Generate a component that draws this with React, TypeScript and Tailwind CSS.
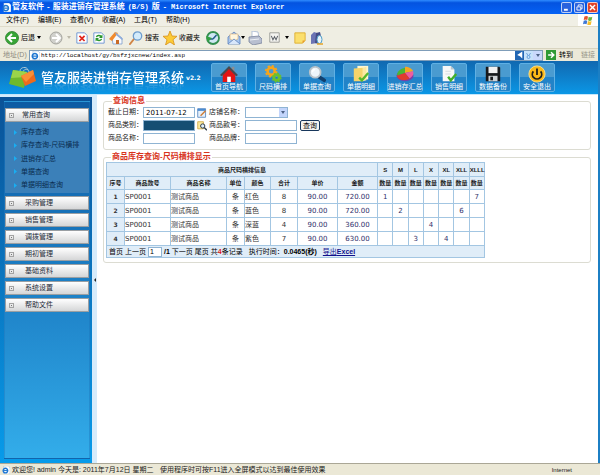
import type { ReactNode } from "react";

const menus = ["文件(F)", "编辑(E)", "查看(V)", "收藏(A)", "工具(T)", "帮助(H)"];

const queries = ["库存查询", "库存查询-尺码横排", "进销存汇总", "单据查询", "单据明细查询"];

const modules = ["采购管理", "销售管理", "调拨管理", "期初管理", "基础资料", "系统设置", "帮助文件"];

const sizes = ["S", "M", "L", "X", "XL", "XLL", "XLLL"];

const rows = [
  { code: "SP0001", name: "测试商品", unit: "条", color: "红色", total: 8, price: "90.00", amount: "720.00", qty: ["1", "", "", "", "", "", "7"] },
  { code: "SP0001", name: "测试商品", unit: "条", color: "蓝色", total: 8, price: "90.00", amount: "720.00", qty: ["", "2", "", "", "", "6", ""] },
  { code: "SP0001", name: "测试商品", unit: "条", color: "深蓝", total: 4, price: "90.00", amount: "360.00", qty: ["", "", "", "4", "", "", ""] },
  { code: "SP0001", name: "测试商品", unit: "条", color: "紫色", total: 7, price: "90.00", amount: "630.00", qty: ["", "", "3", "", "4", "", ""] },
];

const shortcuts: { label: string; icon: ReactNode }[] = [
  {
    label: "首页导航",
    icon: (
      <>
        <path d="M13 2h3v6h-3z" fill="#8a8f94" />
        <path d="M3 10v9h14v-9l-7-7z" fill="#e31414" />
        <path d="M0 11L10 1l10 10-2 1.500-8-8-8 8z" fill="#454b52" />
        <path d="M8 13h4v6H8z" fill="#fff" />
      </>
    ),
  },
  {
    label: "尺码横排",
    icon: (
      <>
        <circle cx="8" cy="7" r="4" fill="none" stroke="#f7a51b" strokeWidth="3" />
        <circle cx="8" cy="7" r="6" fill="none" stroke="#f7a51b" strokeWidth="2" strokeDasharray="2.4 2.3" />
        <circle cx="14" cy="14" r="3" fill="none" stroke="#6cc02c" strokeWidth="3" />
        <circle cx="14" cy="14" r="4.6" fill="none" stroke="#6cc02c" strokeWidth="2" strokeDasharray="1.9 1.7" />
      </>
    ),
  },
  {
    label: "单据查询",
    icon: (
      <>
        <path d="M12 13l6 4" stroke="#12406e" strokeWidth="4" strokeLinecap="round" />
        <circle cx="8" cy="8" r="6" fill="#eef5fa" stroke="#b9c2c9" strokeWidth="2" />
        <path d="M5 8a3 3 0 0 1 3-3" stroke="#fff" strokeWidth="1.5" fill="none" />
      </>
    ),
  },
  {
    label: "单据明细",
    icon: (
      <>
        <path d="M6 1h12v15H6z" fill="#fff6cf" />
        <path d="M2 4l10-1v15H2z" fill="#f5d46b" />
        <path d="M12 3l4-1v15l-4 1z" fill="#fbe9a2" />
        <path d="M8 14l3 3 7-8" fill="none" stroke="#55b82b" strokeWidth="2.6" />
      </>
    ),
  },
  {
    label: "进销存汇总",
    icon: (
      <>
        <ellipse cx="10" cy="12" rx="9.5" ry="6" fill="#7a3fa8" />
        <path d="M10 9L1 12c0-5 4-8 9-9z" fill="#49b536" />
        <path d="M10 9V2c4 0 8 2 9 5z" fill="#f5a623" />
        <path d="M10 9l9-2c1 4-1 6-4 8z" fill="#ef5da0" />
        <path d="M10 9l5 6c-5 3-13 2-14-3z" fill="#e23a2e" />
      </>
    ),
  },
  {
    label: "销售明细",
    icon: (
      <>
        <path d="M3 1h9l4 4v13H3z" fill="#f7f7f7" />
        <path d="M12 1l4 4h-4z" fill="#bcc6cc" />
        <path d="M6 7h6M6 10h6" stroke="#d3d9dc" />
        <path d="M9 13l3 4 6-7" fill="none" stroke="#42b029" strokeWidth="2.6" />
      </>
    ),
  },
  {
    label: "数据备份",
    icon: (
      <>
        <path d="M2 2h15l1 1v15H2z" fill="#17191c" />
        <path d="M5 2h10v7H5z" fill="#f1f1f1" />
        <path d="M5 12h10v6H5z" fill="#cfd3d6" />
        <path d="M7 13h3v4H7z" fill="#17191c" />
      </>
    ),
  },
  {
    label: "安全退出",
    icon: (
      <>
        <circle cx="10" cy="10" r="9" fill="#fbb917" stroke="#ffe08a" />
        <path d="M6 7a5.2 5.2 0 1 0 8 0" fill="none" stroke="#22211c" strokeWidth="2" />
        <path d="M10 4v7" stroke="#22211c" strokeWidth="2" />
      </>
    ),
  },
];

function Glyph({ children, className = "size-[14px]" }: { children: ReactNode; className?: string }) {
  return (
    <svg viewBox="0 0 14 14" className={`shrink-0 ${className}`} aria-hidden="true">
      {children}
    </svg>
  );
}

function Caret({ className = "text-black" }: { className?: string }) {
  return (
    <svg viewBox="0 0 4 3" className={`h-[3px] w-1 shrink-0 ${className}`} aria-hidden="true">
      <path d="M0 0h4L2 3z" fill="currentColor" />
    </svg>
  );
}

function IeIcon({ className = "size-[9px]" }: { className?: string }) {
  return (
    <Glyph className={className}>
      <path d="M3 0h8l3 3v11H3z" fill="#fff" stroke="#8fb0d8" strokeWidth=".8" />
      <circle cx="6" cy="8" r="4" fill="none" stroke="#1d76d2" strokeWidth="2.4" />
      <path d="M3 8h7" stroke="#1d76d2" strokeWidth="1.8" />
    </Glyph>
  );
}

function TitleBar() {
  return (
    <header className="flex h-[14px] items-center bg-linear-to-b from-[#2f8bff] via-[#0453e0] via-20% to-[#0562f5] pr-[2px] pl-[2px] text-white">
      <IeIcon />
      <h1 className="ml-px flex flex-1 items-center gap-[3px] text-[8px] leading-[12px] font-bold whitespace-pre">
        <span>管友软件</span>
        <span>-</span>
        <span>服装进销存管理系统</span>
        <span className="font-['Liberation_Mono',monospace] text-[7px]">(B/S)</span>
        <span>版</span>
        <span className="font-['Liberation_Mono',monospace] text-[7px]">- Microsoft Internet Explorer</span>
      </h1>
      <div className="flex gap-[2px]">
        <button aria-label="最小化" className="size-[11px] rounded-[2px] border border-white/70 bg-[#2a62dd]">
          <Glyph className="size-[9px]">
            <path d="M3 9h6v3H3z" fill="#fff" />
          </Glyph>
        </button>
        <button aria-label="还原" className="size-[11px] rounded-[2px] border border-white/70 bg-[#2a62dd]">
          <Glyph className="size-[9px]">
            <path d="M5 5V3h6v6H9M3 6h6v5H3z" fill="none" stroke="#fff" strokeWidth="1.4" />
          </Glyph>
        </button>
        <button aria-label="关闭" className="size-[11px] rounded-[2px] border border-white/70 bg-[#e0432b]">
          <Glyph className="size-[9px]">
            <path d="M3 3l8 8M11 3l-8 8" stroke="#fff" strokeWidth="2.2" />
          </Glyph>
        </button>
      </div>
    </header>
  );
}

function MenuBar() {
  return (
    <nav className="flex h-[13px] items-center border-b border-[#dedbc9] bg-[#f0efe5] pl-[6px]">
      {menus.map((m) => (
        <button key={m} className="w-8 text-left">
          {m}
        </button>
      ))}
      <div className="ml-auto flex h-full w-[20px] items-center justify-center bg-white">
        <Glyph className="size-[10px]">
          <path d="M2 2c2-1 3-1 5 0L6 7C4 6 3 6 1 7z" fill="#e5532d" />
          <path d="M8 2.500c2 1 3 1 5 0l-1 5c-2 1-3 1-5 0z" fill="#6db33a" />
          <path d="M1 8c2-1 3-1 5 0l-1 5c-2-1-3-1-5 0z" fill="#3f79d6" />
          <path d="M7 8.500c2 1 3 1 5 0l-1 5c-2 1-3 1-5 0z" fill="#f6bf2b" />
        </Glyph>
      </div>
    </nav>
  );
}

function ToolBar() {
  return (
    <div className="flex h-[22px] items-center border-b border-[#d8d4c0] bg-[#efeee3] pl-[5px]">
      <button className="flex w-[32px] items-center gap-[2px] whitespace-nowrap">
        <Glyph>
          <circle cx="7" cy="7" r="6.500" fill="#37a536" stroke="#2a7d2c" strokeWidth=".8" />
          <path d="M7 3L3 7l4 4M3.500 7H11" fill="none" stroke="#fff" strokeWidth="1.9" />
        </Glyph>
        后退
      </button>
      <Caret />
      <button aria-label="前进" className="ml-2">
        <Glyph>
          <circle cx="7" cy="7" r="6" fill="#d0d0cb" stroke="#a4a49e" />
          <path d="M7 3l4 4-4 4M10.500 7H3" fill="none" stroke="#fff" strokeWidth="1.9" />
        </Glyph>
      </button>
      <Caret className="ml-1 text-[#bcb9aa]" />
      <button aria-label="停止" className="ml-[5px]">
        <Glyph className="size-[12px]">
          <path d="M1 1h9l3 3v9H1z" fill="#fff" stroke="#5f8bcf" />
          <path d="M4 4.500l6 6M10 4.500l-6 6" stroke="#e1261c" strokeWidth="2" />
        </Glyph>
      </button>
      <button aria-label="刷新" className="ml-[5px]">
        <Glyph className="size-[12px]">
          <path d="M1 1h9l3 3v9H1z" fill="#fff" stroke="#5f8bcf" />
          <path d="M4 6c1-3 5-2 6 0M10 8c-1 3-5 2-6 0" fill="none" stroke="#29962c" strokeWidth="1.7" />
          <path d="M11 3v4H7zM3 11V7h4z" fill="#29962c" />
        </Glyph>
      </button>
      <button aria-label="主页" className="ml-1">
        <Glyph>
          <path d="M3 7l5-4 5 4v6H4z" fill="#f8f9fc" stroke="#7b9ccc" strokeWidth=".8" />
          <path d="M0 8L6 1l3 1-6 8z" fill="#f18a2d" />
          <path d="M6 1l8 7-1 1-6-5z" fill="#8cabdc" />
          <path d="M7 9h3v4H7z" fill="#c86b27" />
        </Glyph>
      </button>
      <button className="ml-[6px] flex items-center gap-[2px] whitespace-nowrap">
        <Glyph>
          <path d="M1 13l4-5" stroke="#d08344" strokeWidth="2" strokeLinecap="round" />
          <circle cx="8.500" cy="5" r="4.200" fill="#d3ebfb" stroke="#6c9ccd" strokeWidth="1.300" />
        </Glyph>
        搜索
      </button>
      <button className="ml-1 flex items-center gap-[2px] whitespace-nowrap">
        <Glyph>
          <path d="M7 0l2 5 5 .3-4 3.400L11.500 14 7 11l-4.500 3L4 8.700 0 5.300 5 5z" fill="#fccb37" stroke="#d8901b" strokeWidth=".8" />
        </Glyph>
        收藏夹
      </button>
      <button aria-label="历史" className="ml-[6px]">
        <Glyph>
          <circle cx="7" cy="7" r="6" fill="#cfe7f3" stroke="#348f51" strokeWidth="1.800" />
          <path d="M7 8l3.500-4M7 8H4" stroke="#255d8c" strokeWidth="1.500" />
          <path d="M0 5l6 2-4 4z" fill="#32a042" />
        </Glyph>
      </button>
      <button aria-label="邮件" className="ml-[7px]">
        <Glyph>
          <path d="M1 6l6-5 6 5v7H1z" fill="#a9c7ee" stroke="#5a82bd" strokeWidth=".8" />
          <path d="M3 3h8v5L7 10 3 8z" fill="#fff7df" stroke="#d8ad72" strokeWidth=".6" />
          <path d="M1 13l6-5 6 5" fill="#d9e7fa" stroke="#5a82bd" strokeWidth=".8" />
        </Glyph>
      </button>
      <Caret />
      <button aria-label="打印" className="ml-[3px]">
        <Glyph>
          <path d="M4 0l6 1 1 6H4z" fill="#fff" stroke="#9aaecb" strokeWidth=".7" />
          <path d="M1 6l10-1 3 3v4l-9 2-4-3z" fill="#b8bfd0" stroke="#7a849c" strokeWidth=".8" />
          <path d="M2 9l9-1" stroke="#eef1f6" />
        </Glyph>
      </button>
      <button aria-label="编辑" className="ml-[7px]">
        <Glyph className="size-[11px]">
          <path d="M1 1h12v12H1z" fill="#f4f4f0" stroke="#8b8c88" />
          <path d="M3 5l2 5 2-4 2 4 2-5" fill="none" stroke="#5b6068" strokeWidth="1.300" />
        </Glyph>
      </button>
      <Caret className="ml-[5px] text-black" />
      <button aria-label="讨论" className="ml-[5px]">
        <Glyph className="size-[12px]">
          <path d="M1 1h12v9l-3 3H1z" fill="#fbdf6d" stroke="#dcab2c" />
          <path d="M10 13v-3h3z" fill="#e8972c" />
        </Glyph>
      </button>
      <button aria-label="信使" className="ml-1">
        <Glyph>
          <path d="M1 4l3-3 3 1v10l-6 1z" fill="#6c74b4" />
          <path d="M6 2l4-1 1 4-2 8-4-1z" fill="#454c86" />
          <ellipse cx="9.500" cy="8.500" rx="2.500" ry="4" fill="#e8f3fa" stroke="#4f9fc9" />
          <path d="M7 13h6" stroke="#e5a52a" strokeWidth="1.500" />
        </Glyph>
      </button>
    </div>
  );
}

function AddressBar() {
  return (
    <form className="flex h-[12px] items-center bg-[#ece9d8] pr-[3px] pl-[3px]" onSubmit={(e) => e.preventDefault()}>
      <label htmlFor="url" className="w-[26px] shrink-0 whitespace-nowrap text-[#8c8a7e]">
        地址(D)
      </label>
      <div className="flex h-[11px] flex-1 items-center border border-[#7f9db9] bg-white pl-px">
        <IeIcon />
        <input
          id="url"
          className="ml-px h-[9px] min-w-0 flex-1 font-['Liberation_Mono',monospace] text-[6px] leading-[9px] text-black outline-none"
          defaultValue="http://localhost/gy/bsfzjxcnew/index.asp"
        />
        <span className="flex h-[9px] w-[9px] items-center justify-center bg-[#2166b4]">
          <Glyph className="size-[8px]">
            <path d="M2 7l9-6v12L7 9z" fill="#fff" />
          </Glyph>
        </span>
        <span className="flex h-[9px] w-[9px] items-center justify-center bg-[#c6e2fa]">
          <Glyph className="size-[7px]">
            <path d="M3 2l3 5M11 2L8 7" stroke="#4c8dd0" strokeWidth="1.500" />
            <circle cx="7" cy="10" r="3" fill="none" stroke="#4c8dd0" strokeWidth="1.500" />
          </Glyph>
        </span>
        <button type="button" aria-label="展开" className="flex h-[9px] w-[9px] items-center justify-center bg-[#c9d8fb]">
          <Caret className="text-[#4d6185]" />
        </button>
      </div>
      <button className="ml-[3px] flex items-center gap-[3px] whitespace-nowrap text-black">
        <Glyph className="size-[10px]">
          <path d="M0 0h14v14H0z" fill="#2f9a34" />
          <path d="M3 7h7M7 3l4 4-4 4" fill="none" stroke="#fff" strokeWidth="2" />
        </Glyph>
        转到
      </button>
      <span className="ml-2 text-[#9b998c]">链接</span>
    </form>
  );
}

function Banner() {
  return (
    <div className="flex h-[34px] items-center border-b border-[#c4e6fb] bg-linear-to-b from-[#1068b0] to-[#0a97e6] pr-[43px] pl-[9px]">
      <svg viewBox="0 0 28 24" className="h-6 w-7 shrink-0" aria-hidden="true">
        <path d="M11 5c0-4 7-5 8-1M14 6c1-4 6-3 6 0" fill="none" stroke="#a9c6d6" />
        <path d="M4 4l14 2-3 16L0 18z" fill="#6fb92c" />
        <path d="M4 4l14 2-1 5L2 12z" fill="#9bd44a" />
        <path d="M12 10l12-6 3 11-11 5z" fill="#ef6a1c" />
        <path d="M12 10l12-6 1 4-8 8z" fill="#f98f37" />
      </svg>
      <h2 className="ml-1 flex items-center gap-[2px] leading-[16px] text-white">
        <span className="text-[13px] font-medium whitespace-nowrap [-webkit-box-reflect:below_-4px_linear-gradient(transparent_40%,rgba(255,255,255,0.22))]">
          管友服装进销存管理系统
        </span>
        <span className="font-['DejaVu_Sans',sans-serif] text-[6px] font-bold">v2.2</span>
      </h2>
      <nav className="ml-auto flex gap-2">
        {shortcuts.map((s) => (
          <a
            key={s.label}
            href="#"
            className="flex h-[29px] w-9 flex-col items-center rounded-[2px] border border-[#5fb0e4] bg-linear-to-b from-[#4a9bd0] from-50% to-[#2283c8] to-50% pt-px text-white"
          >
            <svg viewBox="0 0 20 20" className="size-[18px] shrink-0" aria-hidden="true">
              {s.icon}
            </svg>
            <span className="text-[7px] leading-[8px] whitespace-nowrap">{s.label}</span>
          </a>
        ))}
      </nav>
    </div>
  );
}

function ModuleButton({ label, open = false }: { label: string; open?: boolean }) {
  return (
    <button className="flex h-[14px] w-full items-center border border-[#9a9fa3] bg-linear-to-b from-white to-[#d5d6d7] pl-[3px] text-[#1d2b38]">
      <span className="flex size-[5px] items-center justify-center border border-[#a3a3a3]">
        <span className="h-px w-px bg-[#777]" />
      </span>
      <span className={open ? "ml-2" : "ml-[11px]"}>{label}</span>
    </button>
  );
}

function Sidebar() {
  return (
    <aside className="flex w-[97px] shrink-0 bg-[#d5ebfb] pt-[2px]">
      <div className="flex-1 bg-linear-to-b from-[#0a5297] to-[#079bea] py-1 pr-[2px] pl-1">
        <div className="flex h-full flex-col gap-[3px] border border-[#1c74b8]/40 bg-linear-to-b from-[#0d5ba3] via-[#2086cb] via-60% to-[#33adea] pt-[6px]">
          <div>
            <ModuleButton label="常用查询" open />
            <ul className="flex h-[71px] flex-col justify-between bg-[#3b80b9] pt-[5px] pb-[3px] pl-[9px]">
              {queries.map((q) => (
                <li key={q}>
                  <a href="#" className="flex items-center gap-1 whitespace-nowrap text-[#0a2c4e]">
                    <svg viewBox="0 0 3 5" className="h-[5px] w-[3px]" aria-hidden="true">
                      <path d="M0 0l3 2.500L0 5z" fill="#19aef2" />
                    </svg>
                    {q}
                  </a>
                </li>
              ))}
            </ul>
          </div>
          {modules.map((m) => (
            <ModuleButton key={m} label={m} />
          ))}
        </div>
      </div>
      <button aria-label="收起菜单" className="flex w-[5px] items-center justify-center">
        <svg viewBox="0 0 2 4" className="h-1 w-[2px]" aria-hidden="true">
          <path d="M2 0v4L0 2z" fill="#222" />
        </svg>
      </button>
    </aside>
  );
}

const field = "h-[11px] w-[52px] border border-[#8fb4d3] bg-white px-[2px] text-[7px] text-black outline-none";

function QueryForm() {
  return (
    <fieldset className="rounded-[3px] border border-[#dcdcd2] px-1 pt-px pb-[5px]">
      <legend className="ml-1 px-px text-[8px] leading-[10px] font-bold text-[#d8331c]">查询信息</legend>
      <form className="grid grid-cols-[35px_66px_36px_52px_20px] gap-y-[2px] text-[#222]" onSubmit={(e) => e.preventDefault()}>
        <label htmlFor="date">截止日期：</label>
        <div className="flex items-center gap-[2px]">
          <input id="date" className={`${field} font-['DejaVu_Sans',sans-serif]`} defaultValue="2011-07-12" />
          <Glyph className="size-[10px]">
            <path d="M1 1h11v12H1z" fill="#e7f1fb" stroke="#3b73b5" />
            <path d="M1 1h11v3H1z" fill="#4b8bd0" />
            <path d="M5 11l7-7" stroke="#d07c36" strokeWidth="2" />
          </Glyph>
        </div>
        <label htmlFor="shop">店铺名称：</label>
        <div className="relative h-[11px] w-[43px]">
          <select id="shop" className="block h-[11px] w-full appearance-none border border-[#8fb4d3] bg-white" />
          <span className="pointer-events-none absolute inset-y-px right-px flex w-2 items-center justify-center bg-[#c3d5fb]">
            <Caret className="text-[#4d6185]" />
          </span>
        </div>
        <span />

        <label htmlFor="category">商品类别：</label>
        <div className="flex items-center gap-[2px]">
          <input id="category" className="h-[11px] w-[52px] border border-[#8fb4d3] bg-[#154e73] px-[2px] text-[7px] text-white outline-none" />
          <Glyph className="size-[10px]">
            <path d="M1 1h8v10H1z" fill="#fbeaa0" stroke="#c99d2c" />
            <circle cx="8" cy="7" r="3" fill="#dfeefa" stroke="#33404c" strokeWidth="1.400" />
            <path d="M10 9l4 4" stroke="#33404c" strokeWidth="2" />
          </Glyph>
        </div>
        <label htmlFor="code">商品款号：</label>
        <input id="code" className={field} />
        <button className="ml-[3px] h-[11px] w-5 rounded-[2px] border border-[#17375c] bg-[#f4f3ee] text-[7px] leading-[9px] text-black">
          查询
        </button>

        <label htmlFor="name">商品名称：</label>
        <input id="name" className={field} />
        <label htmlFor="brand">商品品牌：</label>
        <input id="brand" className={field} />
      </form>
    </fieldset>
  );
}

function StockTable() {
  return (
    <fieldset className="mt-[2px] rounded-[3px] border border-[#dcdcd2] px-[2px] pb-1">
      <legend className="ml-[5px] px-px text-[8px] leading-[10px] font-bold text-[#d8331c]">商品库存查询-尺码横排显示</legend>
      <table className="w-[379px] table-fixed border-collapse text-[#333] [&_td]:overflow-hidden [&_td]:border [&_td]:border-[#a3c6e2] [&_th]:border [&_th]:border-[#a3c6e2] [&_th]:bg-[#e0edf8] [&_th]:whitespace-nowrap">
        <colgroup>
          <col className="w-[18px]" />
          <col className="w-[46px]" />
          <col className="w-[56px]" />
          <col className="w-[18px]" />
          <col className="w-[26px]" />
          <col className="w-[27px]" />
          <col className="w-[40px]" />
          <col className="w-[40px]" />
          {sizes.map((s) => (
            <col key={s} />
          ))}
        </colgroup>
        <thead className="text-[6px] leading-[8px] text-[#1b1b1b]">
          <tr className="h-[14px]">
            <th colSpan={8}>商品尺码横排信息</th>
            {sizes.map((s) => (
              <th key={s}>{s}</th>
            ))}
          </tr>
          <tr className="h-[13px]">
            {["序号", "商品款号", "商品名称", "单位", "颜色", "合计", "单价", "金额"].map((h) => (
              <th key={h}>{h}</th>
            ))}
            {sizes.map((s) => (
              <th key={s}>数量</th>
            ))}
          </tr>
        </thead>
        <tbody className="text-center font-['DejaVu_Sans','Noto_Sans_CJK_SC',sans-serif]">
          {rows.map((r, i) => (
            <tr key={i} className="h-[14px]">
              <th className="text-[6px]">{i + 1}</th>
              <td className="text-left">{r.code}</td>
              <td className="text-left">{r.name}</td>
              <td>{r.unit}</td>
              <td className="text-left">{r.color}</td>
              <td>{r.total}</td>
              <td className="text-[#31316b]">{r.price}</td>
              <td className="text-[#31316b]">{r.amount}</td>
              {r.qty.map((q, n) => (
                <td key={n} className="text-[#31316b]">
                  {q}
                </td>
              ))}
            </tr>
          ))}
        </tbody>
        <tfoot>
          <tr className="h-[12px]">
            <td colSpan={15} className="bg-[#e0edf8]">
              <div className="flex h-[11px] items-center gap-[2px] pl-[2px] whitespace-nowrap text-black">
                <a href="#">首页</a>
                <a href="#">上一页</a>
                <input aria-label="页码" className="h-[10px] w-[14px] border border-[#8fb4d3] bg-white px-px text-[7px] outline-none" defaultValue="1" />
                <b>/1</b>
                <a href="#">下一页</a>
                <a href="#">尾页</a>
                <span>
                  共<b className="text-[#e01818]">4</b>条记录
                </span>
                <span className="ml-1">
                  执行时间：<b>0.0465(秒)</b>
                </span>
                <a href="#" className="ml-1 text-[#10108c] underline">
                  导出<b>Excel</b>
                </a>
              </div>
            </td>
          </tr>
        </tfoot>
      </table>
    </fieldset>
  );
}

function StatusBar() {
  return (
    <footer className="flex h-[12px] items-center border-t border-[#aaa796] bg-[#ebe8d6] pr-7 pl-[2px] whitespace-nowrap text-[#222]">
      <IeIcon className="size-[8px]" />
      <span className="ml-[2px] w-[148px]">欢迎您! admin 今天是: 2011年7月12日 星期二</span>
      <span>使用程序时可按F11进入全屏模式以达到最佳使用效果</span>
      <span className="ml-auto text-[6px]">Internet</span>
    </footer>
  );
}

export default function App() {
  return (
    <div
      lang="zh-CN"
      className="flex min-h-screen flex-col bg-white font-['Liberation_Sans','Noto_Sans_CJK_SC',sans-serif] text-[7px] leading-[10px] text-black"
    >
      <TitleBar />
      <div className="flex flex-1 flex-col border-r-2 border-[#1c7fc4]">
        <MenuBar />
        <ToolBar />
        <AddressBar />
        <Banner />
        <div className="flex flex-1">
          <Sidebar />
          <main className="min-w-0 flex-1 pt-px pr-[7px] pl-[6px]">
            <QueryForm />
            <StockTable />
          </main>
        </div>
      </div>
      <StatusBar />
    </div>
  );
}
